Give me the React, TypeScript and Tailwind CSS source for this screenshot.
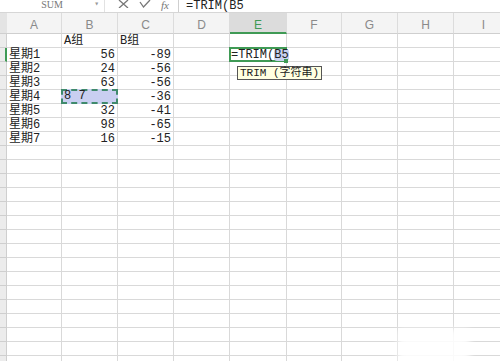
import React from "react";

const COLS = ["A", "B", "C", "D", "E", "F", "G", "H", "I"];
const WIDTHS = [55, 56, 56, 56, 57, 55, 56, 56, 60];

type Cell = { t: string; align?: "l" | "r" };
const data: Record<number, Record<number, Cell>> = {
  1: { 1: { t: "A组", align: "l" }, 2: { t: "B组", align: "l" } },
  2: { 0: { t: "星期1", align: "l" }, 1: { t: "56" }, 2: { t: "-89" } },
  3: { 0: { t: "星期2", align: "l" }, 1: { t: "24" }, 2: { t: "-56" } },
  4: { 0: { t: "星期3", align: "l" }, 1: { t: "63" }, 2: { t: "-56" } },
  5: { 0: { t: "星期4", align: "l" }, 2: { t: "-36" } },
  6: { 0: { t: "星期5", align: "l" }, 1: { t: "32" }, 2: { t: "-41" } },
  7: { 0: { t: "星期6", align: "l" }, 1: { t: "98" }, 2: { t: "-65" } },
  8: { 0: { t: "星期7", align: "l" }, 1: { t: "16" }, 2: { t: "-15" } },
};

const font = { fontFamily: '"Liberation Mono", "Noto Sans CJK SC", monospace' };

export default function App() {
  const rows = Array.from({ length: 24 }, (_, i) => i + 1);
  return (
    <div className="relative w-[500px] h-[361px] overflow-hidden bg-white text-[#222]" style={font}>
      {/* formula bar */}
      <div className="flex h-[13px] items-start border-b border-[#d6d6d6] bg-white">
        <div className="relative flex h-[12px] w-[105px] shrink-0 items-start justify-center border-r border-[#e2e2e2]">
          <span className="mt-0 text-[10px] leading-none text-[#777]" style={{ fontFamily: '"Liberation Serif", serif' }}>SUM</span>
          <span className="absolute right-[5px] top-0 text-[8px] leading-none text-[#999]">▾</span>
        </div>
        <div className="flex h-[12px] w-[73px] shrink-0 items-start gap-[10px] pl-[13px] text-[#777]">
          <svg width="11" height="8" viewBox="0 0 11 8" className="mt-0"><path d="M1 0 L10 8 M10 0 L1 8" stroke="#777" strokeWidth="1.3" fill="none" /></svg>
          <svg width="12" height="8" viewBox="0 0 12 8" className="mt-0"><path d="M1 2 L4.5 7 L11 0" stroke="#777" strokeWidth="1.3" fill="none" /></svg>
          <span className="mt-0 text-[11px] italic leading-none" style={{ fontFamily: '"Liberation Serif", serif' }}>fx</span>
        </div>
        <div className="flex h-[12px] flex-1 items-start border-l border-[#cfcfcf] pl-[7px]">
          <span className="mt-0 text-[12px] leading-none text-[#222]">=TRIM(B5</span>
        </div>
      </div>

      {/* grid */}
      <div className="flex">
        {/* row headers */}
        <div className="flex w-[7px] shrink-0 flex-col bg-[#ececec]">
          <div className="h-[21px] border-b border-[#cfcfcf] bg-[#e4e4e4]" />
          {rows.map((r) => (
            <div
              key={r}
              className={`h-[14px] border-b border-[#cfcfcf] ${r === 2 ? "border-r-2 border-r-[#3f9a55]" : "border-r border-r-[#cfcfcf]"}`}
            />
          ))}
        </div>
        {COLS.map((c, ci) => (
          <div key={c} className="flex shrink-0 flex-col" style={{ width: WIDTHS[ci] }}>
            <div
              className={`flex h-[21px] items-center justify-center border-r border-[#dcdcdc] pt-[4px] text-[12px] leading-none ${
                c === "E" ? "border-b-2 border-b-[#3f9a55] bg-[#dcdcdc] text-[#3f9a55]" : "border-b border-b-[#cfcfcf] bg-[#f4f4f4] text-[#8a8a8a]"
              }`}
              style={{ fontFamily: '"Liberation Sans", sans-serif' }}
            >
              {c}
            </div>
            {rows.map((r) => {
              const cell = data[r]?.[ci];
              const isSel = r === 5 && ci === 1;
              const isActive = r === 2 && ci === 4;
              return (
                <div
                  key={r}
                  className={`relative flex h-[14px] items-end border-b border-r border-[#d9d9d9] text-[12px] leading-[12px] ${
                    cell?.align === "l" ? "justify-start pl-[2px]" : "justify-end pr-[2px]"
                  }`}
                >
                  {cell && <span className="whitespace-nowrap">{cell.t}</span>}
                  {isSel && (
                    <div className="absolute -left-[1px] -top-[1px] z-10 flex h-[15px] w-[57px] items-end border-2 border-dashed border-[#3f8a6c] bg-[#c9cff1] pl-[1px]">
                      <span className="whitespace-pre text-[12px] leading-[12px]">8 7</span>
                    </div>
                  )}
                  {isActive && (
                    <>
                      <div className="absolute -left-[1px] -top-[1px] z-10 h-[15px] w-[58px] border-2 border-[#3f9a55]" />
                      <div className="absolute left-[1px] top-0 z-20 flex h-[13px] items-end whitespace-nowrap text-[12px] leading-[12px]">
                        <span>=TRIM(</span>
                        <span className="rounded-[3px] bg-[#c9d2f0]">B5</span>
                      </div>
                      <div className="absolute -right-[2px] top-[11px] z-20 h-[4px] w-[4px] bg-[#3f9a55]" />
                      <div className="absolute left-[7px] top-[18px] z-30 flex h-[14px] items-center whitespace-nowrap border border-[#555] bg-[#ffffe1] px-[2px] text-[11px] leading-none">
                        TRIM (字符串)
                      </div>
                    </>
                  )}
                </div>
              );
            })}
          </div>
        ))}
      </div>

      {/* watermark blur */}
      <div className="absolute left-[398px] top-[329px] h-[40px] w-[72px] rounded-sm bg-white/85 blur-[3px]" />
    </div>
  );
}
